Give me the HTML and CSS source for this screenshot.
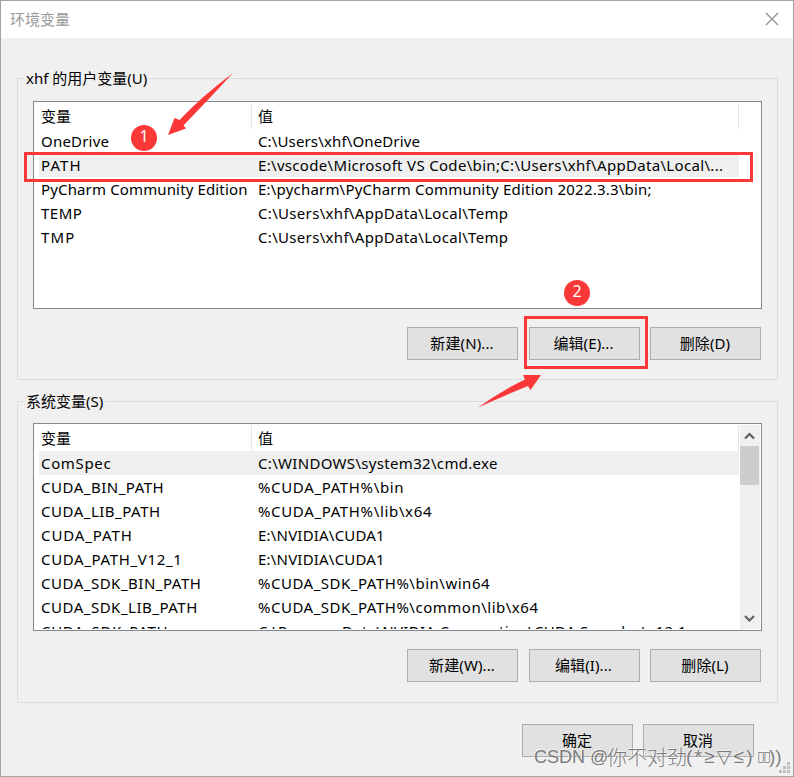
FILE: index.html
```html
<!DOCTYPE html>
<html lang="zh-CN">
<head>
<meta charset="utf-8">
<title>环境变量</title>
<link rel="stylesheet" href="styles.css">
</head>
<body>
<main class="dialog">
  <header class="titlebar">
    <h1 class="title">环境变量</h1>
    <svg class="close" width="14" height="14" viewBox="0 0 14 14"><path d="M1 1 13 13M13 1 1 13"/></svg>
  </header>

  <section class="group user">
    <h2 class="legend">xhf 的用户变量(U)</h2>
    <div class="list">
      <div class="table">
        <div class="row head"><span>变量</span><span>值</span></div>
        <div class="row"><span class="t2">OneDrive</span><span class="t1">C:\Users\xhf\OneDrive</span></div>
        <div class="row selected"><span class="t9">PATH</span><span class="t3">E:\vscode\Microsoft VS Code\bin;C:\Users\xhf\AppData\Local\...</span></div>
        <div class="row"><span class="t1">PyCharm Community Edition</span><span class="t2">E:\pycharm\PyCharm Community Edition 2022.3.3\bin;</span></div>
        <div class="row"><span class="t5">TEMP</span><span class="t3">C:\Users\xhf\AppData\Local\Temp</span></div>
        <div class="row"><span class="t9">TMP</span><span class="t3">C:\Users\xhf\AppData\Local\Temp</span></div>
      </div>
    </div>
    <div class="buttons">
      <button>新建(N)...</button><button>编辑(E)...</button><button>删除(D)</button>
    </div>
  </section>

  <section class="group system">
    <h2 class="legend">系统变量(S)</h2>
    <div class="list">
      <div class="table">
        <div class="row head"><span>变量</span><span>值</span></div>
        <div class="row selected"><span class="t6">ComSpec</span><span class="t3">C:\WINDOWS\system32\cmd.exe</span></div>
        <div class="row"><span class="t5">CUDA_BIN_PATH</span><span class="t6">%CUDA_PATH%\bin</span></div>
        <div class="row"><span class="t5">CUDA_LIB_PATH</span><span class="t6">%CUDA_PATH%\lib\x64</span></div>
        <div class="row"><span class="t8">CUDA_PATH</span><span class="t2">E:\NVIDIA\CUDA1</span></div>
        <div class="row"><span class="t6">CUDA_PATH_V12_1</span><span class="t2">E:\NVIDIA\CUDA1</span></div>
        <div class="row"><span class="t5">CUDA_SDK_BIN_PATH</span><span class="t5">%CUDA_SDK_PATH%\bin\win64</span></div>
        <div class="row"><span class="t5">CUDA_SDK_LIB_PATH</span><span class="t5">%CUDA_SDK_PATH%\common\lib\x64</span></div>
        <div class="row"><span class="t6">CUDA_SDK_PATH</span><span class="t3">C:\ProgramData\NVIDIA Corporation\CUDA Samples\v12.1</span></div>
      </div>
      <div class="scrollbar">
        <svg width="19" height="21" viewBox="0 0 19 21"><path d="M5 13.5 9.500 9 14 13.500"/></svg>
        <div class="thumb"></div>
        <svg class="down" width="19" height="21" viewBox="0 0 19 21"><path d="M5 8 9.500 12.500 14 8"/></svg>
      </div>
    </div>
    <div class="buttons">
      <button>新建(W)...</button><button>编辑(I)...</button><button>删除(L)</button>
    </div>
  </section>

  <footer class="actions"><button>确定</button><button>取消</button></footer>

  <svg class="grip" width="12" height="12" viewBox="0 0 12 12"><path d="M8 0h3v3H8zM4 4h3v3H4zM8 4h3v3H8zM0 8h3v3H0zM4 8h3v3H4zM8 8h3v3H8z"/></svg>
</main>

<svg class="marks" width="794" height="777" viewBox="0 0 794 777">
  <rect x="25.5" y="153.5" width="726" height="27"/>
  <rect x="525.5" y="317.5" width="121" height="50"/>
  <path d="M233 73Q209 99 183.500 125.500L186 128.500 168 135 174.500 118 179.500 120Q201 97 233 73Z"/>
  <path d="M478 407.500Q501 391 525 379.500L523 375H541L530.500 390 528 386Q503 396 478 407.500Z"/>
</svg>
<span class="badge one">1</span>
<span class="badge two">2</span>
<div class="watermark"><span class="wm-latin">CSDN @</span><span class="wm-name">你不对劲</span><span class="wm-face">(*≥▽≤)</span><span class="wm-box">▯▯</span><span class="wm-end">))</span></div>
</body>
</html>
```
FILE: styles.css
```css
* { box-sizing: border-box; }
body {
  margin: 0;
  width: 794px;
  height: 777px;
  overflow: hidden;
  position: relative;
  font: 15px/24px "Noto Sans", "Noto Sans CJK SC", sans-serif;
  color: #000;
}
.dialog {
  width: 794px;
  height: 777px;
  background: #f0f0f0;
  border: 1px solid #a3a3a3;
  position: relative;
}
.titlebar {
  height: 37px;
  background: #fff;
  display: flex;
  justify-content: space-between;
  align-items: center;
  padding: 0 14px 0 9px;
}
.title { margin: -2px 0 0; font-size: 15px; font-weight: 400; color: #999; }
.close { margin-top: -1px; fill: none; stroke: #8a8a8a; stroke-width: 1.1; }
.group {
  width: 761px;
  height: 302px;
  margin-left: 16px;
  border: 1px solid #dcdcdc;
}
.user { margin-top: 40px; }
.system { margin-top: 21px; }
.legend {
  margin: -13px 0 0 6px;
  padding: 0 2px;
  width: max-content;
  height: 24px;
  background: #f0f0f0;
  font-size: 15px;
  font-weight: 400;
}
.list {
  width: 729px;
  height: 208px;
  margin: 10px 0 0 15px;
  border: 1px solid #828790;
  background: #fff;
  display: flex;
  overflow: hidden;
  padding: 1px 1px 1px 5px;
}
.user .list { margin-top: 11px; }
.table { width: 700px; height: 204px; overflow: hidden; flex: none; }
.row {
  height: 24px;
  display: grid;
  grid-template-columns: 213px 487px;
  white-space: pre;
}
.row span { padding-left: 2px; }
.row span + span { padding-left: 6px; }
.row.head { height: 26px; line-height: 26px; }
.row.head span { border-right: 1px solid #e5e5e5; }
.row.selected { background: #f0f0f0; }
.t1 { letter-spacing: .14px; }
.t2 { letter-spacing: .2px; }
.t3 { letter-spacing: .32px; }
.t5 { letter-spacing: .51px; }
.t6 { letter-spacing: .65px; }
.t8 { letter-spacing: .9px; }
.t9 { letter-spacing: 1.1px; }
.scrollbar {
  width: 20px;
  height: 204px;
  margin-left: 1px;
  background: #f0f0f0;
  display: flex;
  flex-direction: column;
}
.scrollbar svg { fill: none; stroke: #606060; stroke-width: 2.2; }
.thumb { width: 19px; height: 39px; background: #cdcdcd; }
.down { margin-top: auto; }
.buttons {
  display: flex;
  justify-content: flex-end;
  gap: 10.5px;
  margin: 18px 16px 0 0;
}
button {
  width: 111px;
  height: 33px;
  padding: 0 1px 2px 0;
  border: 1px solid #adadad;
  background: #e1e1e1;
  color: #000;
  font: inherit;
  letter-spacing: .1px;
}
.actions {
  display: flex;
  justify-content: flex-end;
  gap: 10px;
  margin: 21px 39px 0 0;
}
.grip { position: absolute; right: 2px; bottom: 2px; fill: #bdbdbd; }
.marks { position: absolute; left: 0; top: 0; }
.marks rect { fill: none; stroke: #fb3838; stroke-width: 3; }
.marks path { fill: #fb3838; }
.badge {
  position: absolute;
  width: 26px;
  height: 26px;
  border-radius: 50%;
  background: #fb3838;
  color: #fff;
  text-align: center;
  font-size: 16px;
  line-height: 23px;
}
.one { left: 131px; top: 125px; }
.two { left: 564px; top: 280px; }
.watermark {
  position: absolute;
  left: 534px;
  top: 744px;
  display: flex;
  white-space: pre;
  font: 300 20px/26px "Noto Sans CJK SC", sans-serif;
  color: rgba(110, 110, 110, .9);
  text-shadow: -1px -1px 0 rgba(255, 255, 255, .6);
}
.wm-latin { width: 73px; font: 18px/27px "Liberation Sans", sans-serif; }
.wm-name { width: 79px; }
.wm-face { width: 71px; font: 19px/25px "Liberation Sans", "DejaVu Sans", sans-serif; letter-spacing: 2.2px; }
.wm-box { width: 12px; font: 14px/25px "DejaVu Sans", sans-serif; letter-spacing: -1.4px; }
.wm-end { width: 16px; font: 19px/25px "Liberation Sans", sans-serif; }
```
